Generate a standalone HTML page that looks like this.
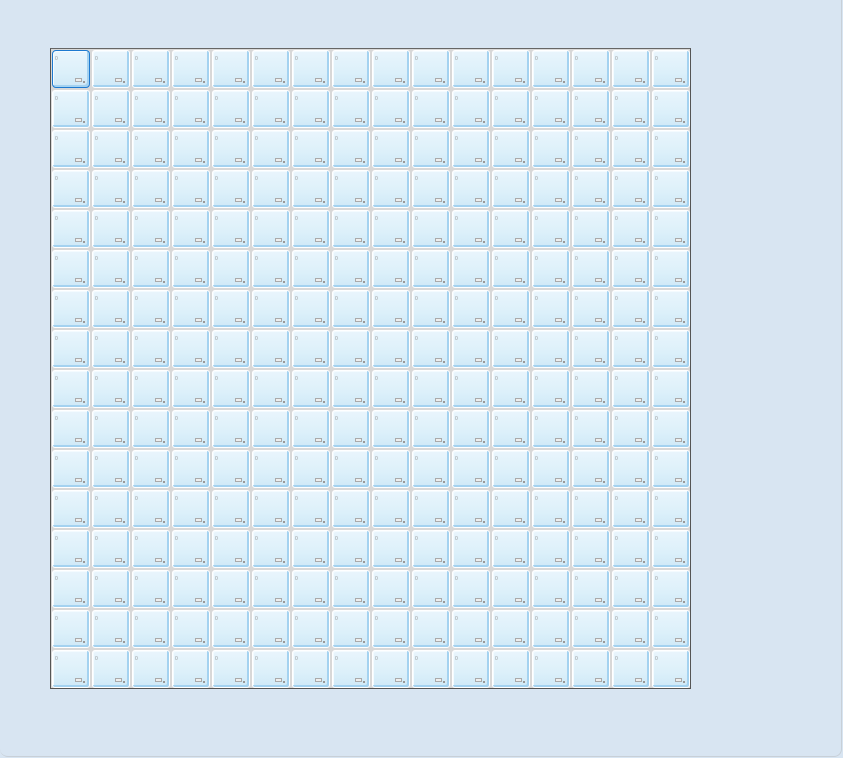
<!DOCTYPE html>
<html><head><meta charset="utf-8"><style>
html,body{margin:0;padding:0}
body{width:843px;height:758px;background:#d8e5f2;position:relative;overflow:hidden;font-family:"Liberation Sans",sans-serif}
.win{position:absolute;left:0;top:0;width:841px;height:756px;border-right:1px solid #c8d0d8;border-bottom:1px solid #c8d0d8;border-radius:0 0 8px 8px}
#g{position:absolute;left:50px;top:48px;width:639px;height:639px;border:1px solid #555;border-top-color:#666;background:#d8d8d8;overflow:hidden}
.c{position:absolute;width:36px;height:36px;border:1px solid #fff;border-radius:3px;
background:linear-gradient(180deg,#e9f5fc 0%,#dcf0fa 60%,#cfe9f7 100%);
box-shadow:inset -2px -2px 0 #a4d2f0,inset 1px 1px 0 #f4fbff}
.c i{position:absolute;left:2px;top:5px;font-size:5px;color:#999;font-style:normal}
.c b{position:absolute;left:22px;top:27px;width:5px;height:2px;border:1px solid #aaa;background:#eee}
.c u{position:absolute;left:30px;top:30px;width:2px;height:2px;background:#999}
.sel{border-color:#1e7ad0;border-radius:4px}
</style></head><body>
<div class="win"></div>
<div id="g"></div>
<script>
var g=document.getElementById('g'),h='';
for(var r=0;r<16;r++)for(var c=0;c<16;c++){
h+='<div class="c'+(r==0&&c==0?' sel':'')+'" style="left:'+(1+c*40)+'px;top:'+(1+r*40)+'px"><i>0</i><b></b><u></u></div>';}
g.innerHTML=h;
</script>
</body></html>
